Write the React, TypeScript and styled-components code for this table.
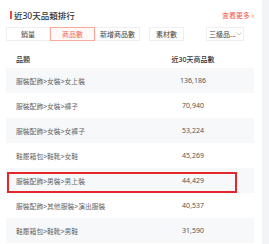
import React from 'react';
import styled, {createGlobalStyle} from 'styled-components';

const rows = [
    {name: '服裝配飾>女裝>女上裝', count: '136,186'},
    {name: '服裝配飾>女裝>褲子', count: '70,940'},
    {name: '服裝配飾>女裝>女褲子', count: '53,224'},
    {name: '鞋履箱包>鞋靴>女鞋', count: '45,269'},
    {name: '服裝配飾>男裝>男上裝', count: '44,429', marked: true},
    {name: '服裝配飾>其他服裝>演出服裝', count: '40,537'},
    {name: '鞋履箱包>鞋靴>男鞋', count: '31,590'},
];

const tabs = [
    {label: '銷量', width: 44},
    {label: '商品數', width: 45, active: true},
    {label: '新增商品數', width: 45},
];

const App = () => {
    return (
        <>
            <GlobalStyle />
            <Page>
                <Panel>
                    <Header>
                        <Title>近30天品類排行</Title>
                        <MoreLink>查看更多 ›</MoreLink>
                    </Header>
                    <Toolbar>
                        <TabGroup>
                            {tabs.map(t => (
                                <Tab key={t.label} $active={t.active} $width={t.width}>
                                    {t.label}
                                </Tab>
                            ))}
                            <Tab $width={35} $gap>
                                素材數
                            </Tab>
                        </TabGroup>
                        <Select>
                            <span>三級品...</span>
                            <svg width='6' height='4' viewBox='0 0 6 4'>
                                <path d='M0.5 0.5 L3 3 L5.5 0.5' fill='none' stroke='#b8b8b8' strokeWidth='0.8' />
                            </svg>
                        </Select>
                    </Toolbar>
                    <Table>
                        <HeadRow>
                            <HeadCell>品類</HeadCell>
                            <HeadCell $center>近30天商品數</HeadCell>
                        </HeadRow>
                        {rows.map((r, i) => (
                            <Row key={r.name} $striped={i % 2 === 0}>
                                <NameCell>{r.name}</NameCell>
                                <CountCell>{r.count}</CountCell>
                                {r.marked && <Marker />}
                            </Row>
                        ))}
                    </Table>
                </Panel>
                <Gutter />
            </Page>
        </>
    );
};

export default App;

const GlobalStyle = createGlobalStyle`
    html, body {
        margin: 0;
        padding: 0;
        width: 269px;
        height: 244px;
        overflow: hidden;
        background: #f3f4f6;
    }
    body {
        font-family: 'Noto Sans', 'Noto Sans CJK TC', sans-serif;
    }
`;

const Page = styled.div`
    display: flex;
    width: 269px;
    height: 244px;
`;

const Panel = styled.div`
    width: 262px;
    height: 244px;
    background: #ffffff;
    box-sizing: border-box;
    padding: 0 8px 0 6px;
    overflow: hidden;
`;

const Gutter = styled.div`
    flex: 1;
    background: #f3f4f6;
`;

const Header = styled.div`
    height: 26px;
    display: flex;
    align-items: center;
    justify-content: space-between;
    padding: 4px 0 0 4px;
    box-sizing: border-box;
`;

const Title = styled.div`
    display: flex;
    align-items: center;
    gap: 2px;
    font-size: 8.5px;
    font-weight: 500;
    color: #333333;
    &::before {
        content: '';
        width: 2px;
        height: 8px;
        background: #f0453c;
    }
`;

const MoreLink = styled.div`
    font-size: 7px;
    color: #f0594c;
`;

const Toolbar = styled.div`
    margin-top: 1px;
    height: 14px;
    display: flex;
    align-items: center;
    justify-content: space-between;
    padding-right: 10px;
`;

const TabGroup = styled.div`
    display: flex;
    height: 14px;
`;

const Tab = styled.div<{$active?: boolean; $width: number; $gap?: boolean}>`
    width: ${p => p.$width}px;
    height: 14px;
    box-sizing: border-box;
    margin-left: ${p => (p.$gap ? '9px' : '0')};
    display: flex;
    align-items: center;
    justify-content: center;
    white-space: nowrap;
    font-size: 7px;
    color: ${p => (p.$active ? '#f2695a' : '#444444')};
    border: 1px solid ${p => (p.$active ? '#f7a99c' : '#efefef')};
    background: ${p => (p.$active ? '#fffaf9' : '#ffffff')};
`;

const Select = styled.div`
    width: 38px;
    height: 14px;
    box-sizing: border-box;
    border: 1px solid #efefef;
    display: flex;
    align-items: center;
    justify-content: space-between;
    padding: 0 3px 0 2px;
    white-space: nowrap;
    font-size: 7px;
    color: #444444;
    svg {
        flex: none;
    }
`;

const Table = styled.div`
    margin-top: 9px;
`;

const HeadRow = styled.div`
    display: grid;
    grid-template-columns: 126px 1fr;
    height: 18px;
    align-items: center;
`;

const HeadCell = styled.div<{$center?: boolean}>`
    font-size: 7px;
    font-weight: 500;
    color: #333333;
    padding-left: ${p => (p.$center ? '0' : '10px')};
    text-align: ${p => (p.$center ? 'center' : 'left')};
`;

const Row = styled.div<{$striped: boolean}>`
    position: relative;
    display: grid;
    grid-template-columns: 126px 1fr;
    height: 25px;
    align-items: center;
    background: ${p => (p.$striped ? '#f7f8fa' : '#ffffff')};
`;

const NameCell = styled.div`
    font-size: 6.8px;
    color: #666666;
    padding-left: 10px;
    white-space: nowrap;
`;

const CountCell = styled.div`
    font-size: 7px;
    color: #555555;
    text-align: center;
`;

const Marker = styled.div`
    position: absolute;
    left: 1px;
    top: 4px;
    width: 230px;
    height: 21px;
    box-sizing: border-box;
    border: 2px solid #e3262b;
    pointer-events: none;
`;
